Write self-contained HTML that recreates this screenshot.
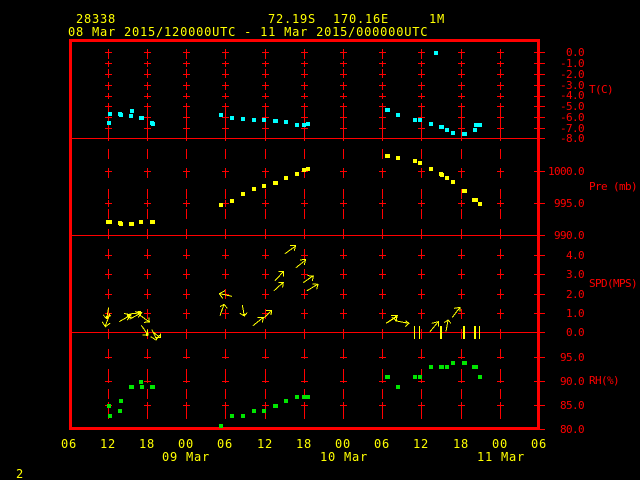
<!DOCTYPE html>
<html>
<head>
<meta charset="utf-8">
<style>
html,body{margin:0;padding:0;background:#000;width:640px;height:480px;overflow:hidden}
svg{display:block}
text{font-family:"DejaVu Sans Mono","Liberation Mono",monospace;white-space:pre}
.t{font-size:12px;letter-spacing:.78px;fill:#ffff00}
.r{font-size:11px;letter-spacing:-.62px;fill:#ff0000;text-anchor:end}
.l{font-size:11px;letter-spacing:-.62px;fill:#ff0000}
</style>
</head>
<body>
<svg width="640" height="480" viewBox="0 0 640 480" xmlns="http://www.w3.org/2000/svg">
<rect width="640" height="480" fill="#000"/>
<defs>
<path id="c" fill="none" stroke="#ff0000" stroke-width="1" shape-rendering="crispEdges" d="M.5 49V59M.5 61V67M.5 69V78M.5 82V90M.5 93V99M.5 103V138M.5 139V141M.5 149V159M.5 168V178M.5 189V199M.5 200V207M.5 209V219M.5 229V239M.5 249V259M.5 269V279M.5 289V299M.5 309V319M.5 329V339M.5 349V359M.5 369V383M.5 389V399M.5 402V419
M-3 52.5H4M-3 63.5H4M-3 74.5H4M-3 85.5H4M-3 96.5H4M-3 106.5H4M-3 117.5H4M-3 128.5H4M-3 171.5H4M-3 203.5H4M-3 255.5H4M-3 274.5H4M-3 294.5H4M-3 313.5H4M-3 357.5H4M-3 381.5H4M-3 405.5H4"/>
</defs>
<use href="#c" x="108"/><use href="#c" x="147"/><use href="#c" x="186"/><use href="#c" x="225"/><use href="#c" x="265"/><use href="#c" x="304"/><use href="#c" x="343"/><use href="#c" x="382"/><use href="#c" x="421"/><use href="#c" x="461"/><use href="#c" x="500"/>

<g fill="none" stroke="#ff0000" shape-rendering="crispEdges">
<path d="M72 138.5H545M72 235.5H545M72 332.5H545"/>
<path d="M534 52.5H545M534 63.5H545M534 74.5H545M534 85.5H545M534 96.5H545M534 106.5H545M534 117.5H545M534 128.5H545M534 171.5H545M534 203.5H545M534 255.5H545M534 274.5H545M534 294.5H545M534 313.5H545M534 357.5H545M534 381.5H545M534 405.5H545M534 429.5H545"/>
<rect x="70.5" y="40.5" width="468" height="388" stroke-width="3"/>
</g>

<!-- wind bars -->
<g fill="#ffff00" shape-rendering="crispEdges">
<rect x="414" y="326" width="1" height="13"/><rect x="419" y="326" width="1" height="13"/><rect x="440" y="326" width="2" height="13"/><rect x="463" y="326" width="2" height="13"/><rect x="474" y="326" width="2" height="13"/><rect x="479" y="326" width="1" height="13"/>
<rect x="127" y="314" width="3" height="3"/><rect x="138" y="311" width="3" height="3"/><rect x="146" y="333" width="2" height="3"/><rect x="106" y="316" width="2" height="2"/><rect x="395" y="315" width="2" height="3"/><rect x="243" y="314" width="2" height="2"/>
</g>

<!-- wind arrows -->
<g fill="none" stroke="#ffff00" stroke-width="3" shape-rendering="crispEdges">
<g transform="translate(200 235) scale(.33333)">
<path d="M255 56L287 33M270 32L287 31L283 47"/>
<path d="M288 98L317 75M300 75L317 73L313 90"/>
<path d="M225 137L250 110M235 110H250V125"/>
<path d="M222 167L250 142M235 143L250 142L248 157"/>
<path d="M310 143L340 122M323 122L340 123L337 138"/>
<path d="M320 168L354 147M337 147L354 148L350 163"/>
<path d="M96 184L60 176M75 167L58 176L68 190"/>
<path d="M60 242L72 208M60 215L72 208L82 220"/>
<path d="M127 210L133 243M120 235L133 243L142 232"/>
<path d="M159 272L190 247M172 247H190L187 263"/>
<path d="M190 250L215 227M198 227H215L213 240"/>
</g>
<g transform="translate(0 240) scale(.33333)">
<path d="M326 202L320 236M310 225L320 236L332 226"/>
<path d="M330 220L316 258M306 245L316 260L330 250"/>
<path d="M358 245L392 225M372 220L392 225L382 240"/>
<path d="M388 238L425 218M405 215L425 218L415 232"/>
<path d="M388 222L426 218M384 228H394M384 232H394"/>
<path d="M418 224L448 246M432 247L448 246L447 232"/>
<path d="M424 256L444 285M428 285H444L442 268"/>
<path d="M455 268L470 298M452 290L468 300L480 285"/>
<path d="M458 275L480 293M465 292H482V280"/>
</g>
<g transform="translate(380 300) scale(.33333)">
<path d="M18 70L52 47M33 47H52L48 62"/>
<path d="M22 68L50 50M36 52L50 62"/>
<path d="M45 62L86 70M76 62L87 70L76 80"/>
<path d="M150 95L175 65M155 70L175 65V80"/>
<path d="M198 95L204 60M193 68L204 60L213 70"/>
<path d="M217 52L240 22M222 25L240 22V35"/>
</g>
</g>

<!-- cyan -->
<path fill="#00ffff" shape-rendering="crispEdges" d="M108 112h4v4h-4zM107 121h4v4h-4zM118 112h4v4h-4zM119 113h4v4h-4zM129 114h4v4h-4zM130 109h4v4h-4zM139 116h4v4h-4zM140 116h4v4h-4zM150 121h4v4h-4zM151 122h4v4h-4zM219 113h4v4h-4zM230 116h4v4h-4zM241 117h4v4h-4zM252 118h4v4h-4zM262 118h4v4h-4zM273 119h4v4h-4zM274 119h4v4h-4zM284 120h4v4h-4zM295 123h4v4h-4zM302 123h4v4h-4zM306 122h4v4h-4zM385 108h4v4h-4zM386 108h4v4h-4zM396 113h4v4h-4zM413 118h4v4h-4zM418 118h4v4h-4zM429 122h4v4h-4zM439 125h4v4h-4zM440 125h4v4h-4zM445 128h4v4h-4zM451 131h4v4h-4zM462 132h4v4h-4zM463 132h4v4h-4zM473 128h4v4h-4zM474 123h4v4h-4zM476 123h4v4h-4zM478 123h4v4h-4zM434 51h4v4h-4z"/>
<!-- yellow -->
<path fill="#ffff00" shape-rendering="crispEdges" d="M106 220h4v4h-4zM108 220h4v4h-4zM118 221h4v4h-4zM119 222h4v4h-4zM129 222h4v4h-4zM130 222h4v4h-4zM139 220h4v4h-4zM150 220h4v4h-4zM151 220h4v4h-4zM219 203h4v4h-4zM230 199h4v4h-4zM241 192h4v4h-4zM252 187h4v4h-4zM262 184h4v4h-4zM273 181h4v4h-4zM274 181h4v4h-4zM284 176h4v4h-4zM295 172h4v4h-4zM302 168h4v4h-4zM306 167h4v4h-4zM385 154h4v4h-4zM386 154h4v4h-4zM396 156h4v4h-4zM413 159h4v4h-4zM418 161h4v4h-4zM429 167h4v4h-4zM439 172h4v4h-4zM440 173h4v4h-4zM445 176h4v4h-4zM451 180h4v4h-4zM462 189h4v4h-4zM463 189h4v4h-4zM472 198h4v4h-4zM474 198h4v4h-4zM478 202h4v4h-4z"/>
<!-- green -->
<path fill="#00e600" shape-rendering="crispEdges" d="M108 414h4v4h-4zM107 404h4v4h-4zM118 409h4v4h-4zM119 399h4v4h-4zM129 385h4v4h-4zM130 385h4v4h-4zM139 380h4v4h-4zM140 385h4v4h-4zM150 385h4v4h-4zM151 385h4v4h-4zM219 424h4v4h-4zM230 414h4v4h-4zM241 414h4v4h-4zM252 409h4v4h-4zM262 409h4v4h-4zM273 404h4v4h-4zM274 404h4v4h-4zM284 399h4v4h-4zM295 395h4v4h-4zM302 395h4v4h-4zM304 395h4v4h-4zM306 395h4v4h-4zM385 375h4v4h-4zM386 375h4v4h-4zM396 385h4v4h-4zM413 375h4v4h-4zM418 375h4v4h-4zM429 365h4v4h-4zM439 365h4v4h-4zM440 365h4v4h-4zM445 365h4v4h-4zM451 361h4v4h-4zM462 361h4v4h-4zM463 361h4v4h-4zM472 365h4v4h-4zM474 365h4v4h-4zM478 375h4v4h-4z"/>

<!-- titles -->
<text class="t" x="76" y="23">28338</text>
<text class="t" x="268" y="23">72.19S</text>
<text class="t" x="333" y="23">170.16E</text>
<text class="t" x="429" y="23">1M</text>
<text class="t" x="68" y="36">08 Mar 2015/120000UTC - 11 Mar 2015/000000UTC</text>

<!-- right labels -->
<text class="r" x="584" y="56">0.0</text>
<text class="r" x="584" y="67">-1.0</text>
<text class="r" x="584" y="78">-2.0</text>
<text class="r" x="584" y="89">-3.0</text>
<text class="r" x="584" y="99">-4.0</text>
<text class="r" x="584" y="110">-5.0</text>
<text class="r" x="584" y="121">-6.0</text>
<text class="r" x="584" y="132">-7.0</text>
<text class="r" x="584" y="142">-8.0</text>
<text class="r" x="584" y="175">1000.0</text>
<text class="r" x="584" y="207">995.0</text>
<text class="r" x="584" y="239">990.0</text>
<text class="r" x="584" y="259">4.0</text>
<text class="r" x="584" y="278">3.0</text>
<text class="r" x="584" y="298">2.0</text>
<text class="r" x="584" y="317">1.0</text>
<text class="r" x="584" y="336">0.0</text>
<text class="r" x="584" y="361">95.0</text>
<text class="r" x="584" y="385">90.0</text>
<text class="r" x="584" y="409">85.0</text>
<text class="r" x="584" y="433">80.0</text>

<text class="l" x="589" y="93">T(C)</text>
<text class="l" x="589" y="190">Pre (mb)</text>
<text class="l" x="589" y="287">SPD(MPS)</text>
<text class="l" x="589" y="384">RH(%)</text>

<!-- x axis -->
<text class="t" x="61" y="448">06</text>
<text class="t" x="100" y="448">12</text>
<text class="t" x="139" y="448">18</text>
<text class="t" x="178" y="448">00</text>
<text class="t" x="217" y="448">06</text>
<text class="t" x="257" y="448">12</text>
<text class="t" x="296" y="448">18</text>
<text class="t" x="335" y="448">00</text>
<text class="t" x="374" y="448">06</text>
<text class="t" x="413" y="448">12</text>
<text class="t" x="453" y="448">18</text>
<text class="t" x="492" y="448">00</text>
<text class="t" x="531" y="448">06</text>
<text class="t" x="162" y="461">09 Mar</text>
<text class="t" x="320" y="461">10 Mar</text>
<text class="t" x="477" y="461">11 Mar</text>
<text class="t" x="16" y="478">2</text>
</svg>
</body>
</html>
